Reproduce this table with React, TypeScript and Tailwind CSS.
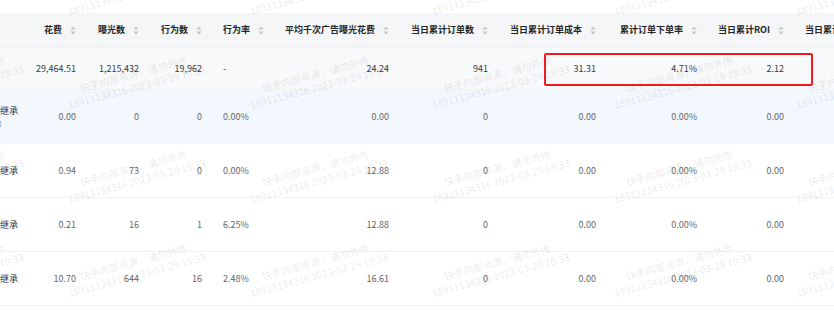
import React from "react";

type Col = {
  title: string;
  width: string;
  align: "left" | "right";
};

const cols: Col[] = [
  { title: "花费", width: "w-[61px]", align: "right" },
  { title: "曝光数", width: "w-[63px]", align: "right" },
  { title: "行为数", width: "w-[63px]", align: "right" },
  { title: "行为率", width: "w-[63px]", align: "left" },
  { title: "平均千次广告曝光花费", width: "w-[124px]", align: "right" },
  { title: "当日累计订单数", width: "w-[99px]", align: "right" },
  { title: "当日累计订单成本", width: "w-[108px]", align: "right" },
  { title: "累计订单下单率", width: "w-[101px]", align: "right" },
  { title: "当日累计ROI", width: "w-[87px]", align: "right" },
];

const summary = ["29,464.51", "1,215,432", "19,962", "-", "24.24", "941", "31.31", "4.71%", "2.12"];

const rows = [
  { name: "不可继承", sub: "投放平台", values: ["0.00", "0", "0", "0.00%", "0.00", "0", "0.00", "0.00%", "0.00"] },
  { name: "不可继承", values: ["0.94", "73", "0", "0.00%", "12.88", "0", "0.00", "0.00%", "0.00"] },
  { name: "不可继承", values: ["0.21", "16", "1", "6.25%", "12.88", "0", "0.00", "0.00%", "0.00"] },
  { name: "不可继承", values: ["10.70", "644", "16", "2.48%", "16.61", "0", "0.00", "0.00%", "0.00"] },
];

// small up / down carets used on sortable headers
const SortIcon = () => (
  <svg width="6" height="9" viewBox="0 0 6 9" className="shrink-0">
    <path d="M3 0.5 L5.6 3.6 H0.4 Z" fill="#c4c4c4" />
    <path d="M3 8.5 L5.6 5.4 H0.4 Z" fill="#c4c4c4" />
  </svg>
);

const Cell = ({ col, children }: { col: Col; children: React.ReactNode }) => (
  <div
    className={`${col.width} shrink-0 flex items-center whitespace-nowrap ${
      col.align === "right" ? "justify-end pr-[11px]" : "justify-start pl-[10px]"
    }`}
  >
    {children}
  </div>
);

const Watermark = () => (
  <div className="pointer-events-none absolute left-[-138px] top-[-61px] grid grid-cols-[repeat(6,182px)] auto-rows-[94px]">
    {Array.from({ length: 30 }).map((_, i) => (
      <div key={i} className="flex items-center justify-center">
        <div className="-rotate-[15deg] text-center text-[10px] leading-[13px] text-black/[0.1] whitespace-nowrap">
          <div>快手内部资源，请勿外传</div>
          <div>18911134316 2023-03-29 18:33</div>
        </div>
      </div>
    ))}
  </div>
);

export default function App() {
  return (
    <div
      className="relative w-[834px] h-[321px] overflow-hidden bg-white text-[9px]"
      style={{ fontFamily: '"Noto Sans CJK SC", "Noto Sans", sans-serif' }}
    >
      <div className="h-[13px] bg-white" />

      {/* header */}
      <div className="flex h-[35px] bg-[#f5f6f8] border-b border-[#eef0f3] font-bold text-[#262626]">
        <div className="w-[26px] shrink-0" />
        {cols.map((col) => (
          <Cell key={col.title} col={col}>
            <span>{col.title}</span>
            <span className="ml-2">
              <SortIcon />
            </span>
          </Cell>
        ))}
        <div className="shrink-0 pl-[10px] flex items-center whitespace-nowrap">当日累计GMV</div>
      </div>

      {/* summary row */}
      <div className="flex h-[42px] bg-[#f8f9fb] border-b border-[#f0f1f3] text-[#3a3a3a]">
        <div className="w-[26px] shrink-0" />
        {cols.map((col, i) => (
          <Cell key={col.title} col={col}>
            {summary[i]}
          </Cell>
        ))}
      </div>

      {rows.map((row, r) => (
        <div
          key={r}
          className={`flex h-[54px] border-b border-[#f2f2f2] text-[#666] ${
            r === 0 ? "bg-[#f3f7fe]" : "bg-white"
          }`}
        >
          <div className="w-[26px] shrink-0 overflow-hidden flex flex-col justify-center">
            <div className="ml-[-18px] whitespace-nowrap text-[#333]">{row.name}</div>
            {row.sub && (
              <div className="ml-[-30px] whitespace-nowrap text-[8px] text-[#8a94a6]">{row.sub}</div>
            )}
          </div>
          {cols.map((col, i) => (
            <Cell key={col.title} col={col}>
              {row.values[i]}
            </Cell>
          ))}
        </div>
      ))}

      <Watermark />

      {/* highlight box */}
      <div className="pointer-events-none absolute left-[544px] top-[53px] w-[269px] h-[33px] border-2 border-[#ee1c1c] rounded-[2px]" />
    </div>
  );
}
